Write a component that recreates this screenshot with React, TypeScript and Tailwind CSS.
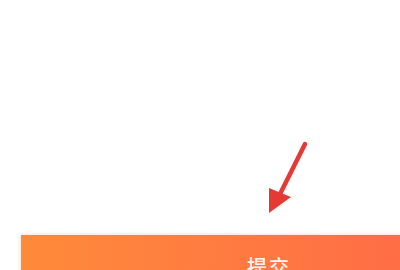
export default function App() {
  return (
    <div className="w-[400px] h-[270px] overflow-hidden bg-white" style={{ fontFamily: '"Noto Sans CJK SC", "Noto Sans", sans-serif' }}>
      <div className="relative h-[235px]">
        <svg className="absolute left-0 top-0" width="400" height="235" viewBox="0 0 400 235">
          <line x1="305" y1="144" x2="279" y2="196" stroke="#e53935" strokeWidth="4.5" strokeLinecap="round" />
          <polygon points="269,213 269,188 291,197" fill="#e53935" />
        </svg>
      </div>
      <div className="pl-[21px]">
        <button className="w-[496px] h-[63px] flex items-center justify-center bg-gradient-to-r from-[#ff8a3a] to-[#ff6448] text-white/95 text-[20px] font-medium tracking-[2px] shadow-[0_0_4px_rgba(255,120,60,0.35)]">
          提交
        </button>
      </div>
    </div>
  );
}
